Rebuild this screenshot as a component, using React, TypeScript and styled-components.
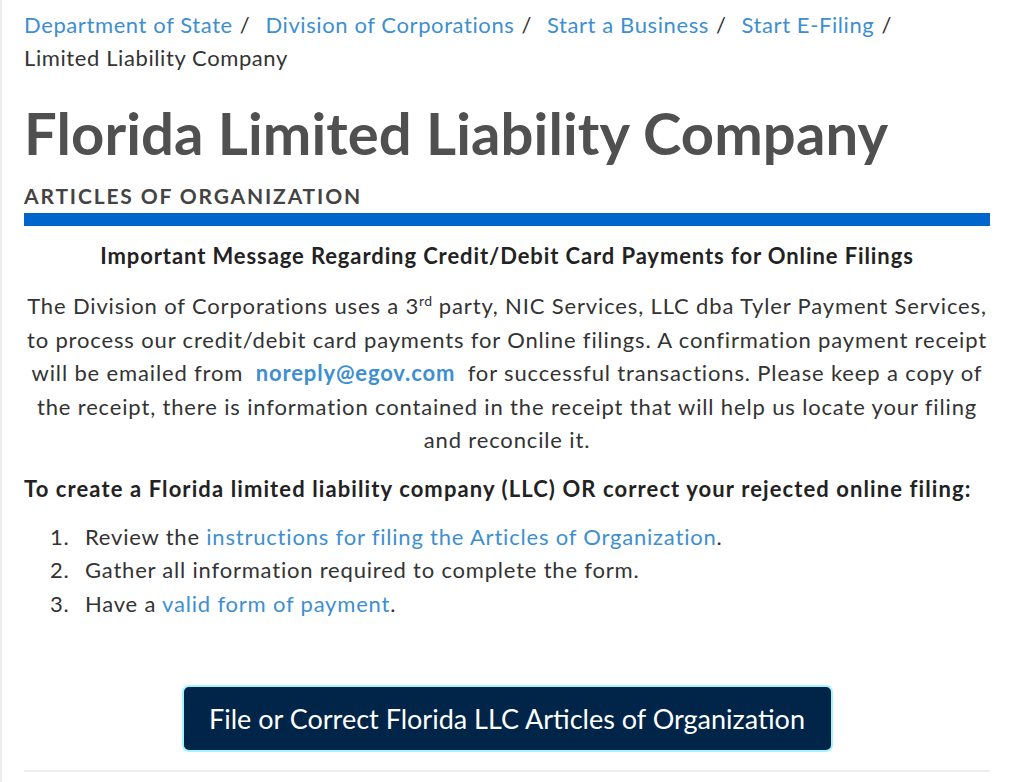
import React from "react";
import styled, { createGlobalStyle } from "styled-components";

const Global = createGlobalStyle`
  html, body { margin: 0; padding: 0; background: #fff; }
  body { font-family: Lato, "Open Sans", sans-serif; color: #333; }
`;

const Page = styled.div`
  min-height: 782px;
  border-left: 2px solid #ececec;
  box-sizing: border-box;
  padding: 8px 34px 0 22px;
`;

const Crumbs = styled.nav`
  font-size: 22px;
  line-height: 33px;
  letter-spacing: 0.6px;
  color: #333;
`;

const Crumb = styled.a`
  color: #3d8fd1;
  text-decoration: none;
`;

const Sep = styled.span`
  color: #333;
  margin: 0 15px 0 7px;
`;

const Title = styled.h1`
  font-family: Lato, sans-serif;
  font-weight: bold;
  font-size: 58px;
  line-height: 64px;
  color: #505050;
  margin: 27px 0 0;
  letter-spacing: 0.1px;
`;

const Subtitle = styled.h2`
  font-size: 21px;
  font-weight: bold;
  color: #444;
  margin: 17px 0 0;
  line-height: 28px;
  letter-spacing: 1.85px;
  padding-bottom: 3px;
  border-bottom: 13px solid #0066cc;
`;

const Notice = styled.section`
  text-align: center;
  margin-top: 15px;
`;

const NoticeTitle = styled.h3`
  font-size: 22px;
  font-weight: bold;
  line-height: 30px;
  letter-spacing: 0.9px;
  color: #222;
  margin: 0 0 18px;
`;

const Para = styled.p`
  font-size: 22px;
  line-height: 33.5px;
  letter-spacing: 0.85px;
  margin: 0;
  color: #333;
`;

const Sup = styled.sup`
  font-size: 14px;
  line-height: 0;
  letter-spacing: 0.3px;
`;

const Mail = styled.a`
  color: #3d8fd1;
  font-weight: bold;
  text-decoration: none;
  margin: 0 6px;
`;

const Lead = styled.p`
  font-size: 22px;
  font-weight: bold;
  line-height: 30px;
  letter-spacing: 1.1px;
  color: #222;
  margin: 17px 0 0;
`;

const Steps = styled.ol`
  list-style: none;
  counter-reset: step;
  margin: 16px 0 0;
  padding-left: 26px;
  font-size: 22px;
  line-height: 33.5px;
  letter-spacing: 0.8px;
  color: #333;
`;

const Step = styled.li`
  counter-increment: step;
  &::before {
    content: counter(step) ".";
    display: inline-block;
    width: 35px;
  }
`;

const Link = styled.a`
  color: #3d8fd1;
  text-decoration: none;
`;

const ButtonRow = styled.div`
  display: flex;
  justify-content: center;
  margin-top: 65px;
  padding-bottom: 18px;
  border-bottom: 2px solid #eeeeee;
`;

const FileButton = styled.button`
  background: #002548;
  color: #fff;
  border: 2px solid #a3f4fc;
  border-radius: 7px;
  font-family: Lato, sans-serif;
  font-size: 27px;
  padding: 0;
  height: 67px;
  width: 651px;
  cursor: pointer;
`;

export default function App() {
  return (
    <>
      <Global />
      <Page>
        <Crumbs>
          <Crumb href="#">Department of State</Crumb>
          <Sep>/</Sep>
          <Crumb href="#">Division of Corporations</Crumb>
          <Sep>/</Sep>
          <Crumb href="#">Start a Business</Crumb>
          <Sep>/</Sep>
          <Crumb href="#">Start E-Filing</Crumb>
          <Sep>/</Sep>
          <br />
          Limited Liability Company
        </Crumbs>
        <Title>Florida Limited Liability Company</Title>
        <Subtitle>ARTICLES OF ORGANIZATION</Subtitle>
        <Notice>
          <NoticeTitle>Important Message Regarding Credit/Debit Card Payments for Online Filings</NoticeTitle>
          <Para>
            The Division of Corporations uses a 3<Sup>rd</Sup> party, NIC Services, LLC dba Tyler Payment Services,
            <br />
            to process our credit/debit card payments for Online filings. A confirmation payment receipt
            <br />
            will be emailed from <Mail href="#">noreply@egov.com</Mail> for successful transactions. Please keep a copy of
            <br />
            the receipt, there is information contained in the receipt that will help us locate your filing
            <br />
            and reconcile it.
          </Para>
        </Notice>
        <Lead>To create a Florida limited liability company (LLC) OR correct your rejected online filing:</Lead>
        <Steps>
          <Step>Review the <Link href="#">instructions for filing the Articles of Organization</Link>.</Step>
          <Step>Gather all information required to complete the form.</Step>
          <Step>Have a <Link href="#">valid form of payment</Link>.</Step>
        </Steps>
        <ButtonRow>
          <FileButton>File or Correct Florida LLC Articles of Organization</FileButton>
        </ButtonRow>
      </Page>
    </>
  );
}
